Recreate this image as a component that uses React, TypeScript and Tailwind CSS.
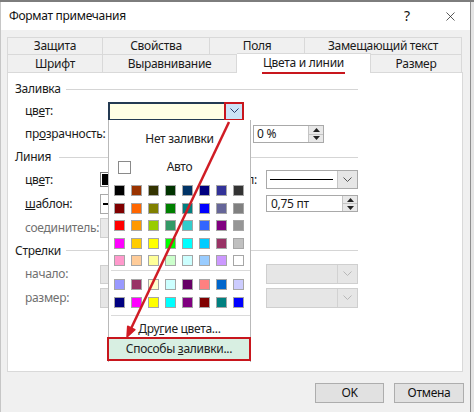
import { X } from "lucide-react";

const palette = [
  ["#000000", "#993300", "#333300", "#003300", "#003366", "#000080", "#333399", "#333333"],
  ["#800000", "#ff6600", "#808000", "#008000", "#008080", "#0000ff", "#666699", "#808080"],
  ["#ff0000", "#ff9900", "#99cc00", "#339966", "#33cccc", "#3366ff", "#800080", "#969696"],
  ["#ff00ff", "#ffcc00", "#ffff00", "#00ff00", "#00ffff", "#00ccff", "#993366", "#c0c0c0"],
  ["#ff99cc", "#ffcc99", "#ffff99", "#ccffcc", "#ccffff", "#99ccff", "#cc99ff", "#ffffff"],
];

const extra = [
  ["#9999ff", "#993366", "#ffffcc", "#ccffff", "#660066", "#ff8080", "#0066cc", "#ccccff"],
  ["#000080", "#ff00ff", "#ffff00", "#00ffff", "#800080", "#800000", "#008080", "#0000ff"],
];

function Chevron({ className = "" }: { className?: string }) {
  return (
    <svg width="9" height="6" viewBox="0 0 9 6" className={className}>
      <path d="M0.5 0.5 L4.5 4.5 L8.5 0.5" fill="none" stroke="currentColor" strokeWidth="1" />
    </svg>
  );
}

function Spinner() {
  return (
    <div className="flex flex-col w-[15px] border-l border-[#c4c4c4]">
      <div className="flex-1 flex items-center justify-center bg-[#e8e8e8] border-b border-[#c4c4c4]">
        <svg width="7" height="4" viewBox="0 0 7 4"><path d="M0 4 L3.5 0 L7 4 Z" fill="#222" /></svg>
      </div>
      <div className="flex-1 flex items-center justify-center bg-[#e8e8e8]">
        <svg width="7" height="4" viewBox="0 0 7 4"><path d="M0 0 L3.5 4 L7 0 Z" fill="#222" /></svg>
      </div>
    </div>
  );
}

function Section({ title, lineStart }: { title: string; lineStart: number }) {
  return (
    <div className="flex items-center w-[343px]">
      <span className="text-[#1a1a1a]">{title}</span>
      <div className="flex-1 h-px bg-[#d5d5d5]" style={{ marginLeft: lineStart }} />
    </div>
  );
}

function Swatches({ rows, gap }: { rows: string[][]; gap: string }) {
  return (
    <div className={`grid grid-cols-[repeat(8,11px)] gap-x-[6px] ${gap} pl-[5px]`}>
      {rows.flat().map((c, i) => (
        <div key={i} className="w-[11px] h-[11px] border border-[#a6a6a6]" style={{ backgroundColor: c }} />
      ))}
    </div>
  );
}

function ColorPopup() {
  return (
    <div className="absolute left-[100px] top-[47px] w-[143px] h-[242px] bg-white border-x border-[#b9b9b9] flex flex-col">
      <div className="h-[26px] mt-[6px] flex items-center justify-center text-[#222]">Нет заливки</div>
      <div className="h-[24px] mt-[3px] grid grid-cols-[22px_1fr_22px] items-center">
        <div className="justify-self-end w-[13px] h-[13px] border border-[#8a8a8a] bg-white" />
        <div className="text-center text-[#222]">Авто</div>
      </div>
      <div className="mt-[6px]">
        <Swatches rows={palette} gap="gap-y-[6.5px]" />
      </div>
      <div className="mt-[4px] ml-[2px] h-px bg-[#dadada]" />
      <div className="mt-[8px]">
        <Swatches rows={extra} gap="gap-y-[7px]" />
      </div>
      <div className="mt-[7px] ml-[2px] h-px bg-[#dadada]" />
      <div className="h-[21px] pt-[4px] flex items-center justify-center text-[#222]">
        <span>Дру<span className="underline">г</span>ие цвета...</span>
      </div>
      <div className="h-[24px] -ml-[2px] -mr-[1px] border-2 border-[#c8161d] bg-[#d8efe2] flex items-center justify-center text-[#222]">
        <span>Способы <span className="underline">з</span>аливки...</span>
      </div>
    </div>
  );
}

function DisabledCombo({ w, h }: { w: string; h: string }) {
  return (
    <div className={`${w} ${h} flex border border-[#cfcfcf] bg-[#e6e6e6]`}>
      <div className="flex-1" />
      <div className="w-[20px] flex items-center justify-center border-l border-[#d2d2d2] text-[#b8b8b8]">
        <Chevron />
      </div>
    </div>
  );
}

export default function App() {
  return (
    <div className="w-[474px] h-[412px] overflow-hidden bg-[#dedede] relative font-['Noto_Sans','Liberation_Sans',sans-serif] text-[12px] tracking-[-0.3px] leading-none flex flex-col">
      <div className="h-[2px] bg-[#7d7d7d]" />
      <div className="flex flex-1">
        <div className="w-[471px] flex flex-col bg-[#f0f0f0] border-l border-[#c6c6c6] border-r border-r-[#8e8e8e]">
          {/* Title bar */}
          <div className="h-[28px] bg-white flex items-center pl-[8px] text-[#111]">
            <span className="flex-1">Формат примечания</span>
            <span className="w-[10px] text-[14px] mr-[29px]">?</span>
            <X size={15} strokeWidth={1.2} className="mr-[12px] text-[#222]" />
          </div>

          {/* Tabs */}
          <div className="pt-[7px] pl-[6px] text-[#1a1a1a]">
            <div className="flex h-[17px]">
              {[
                ["Защита", "w-[96px]"],
                ["Свойства", "w-[107px]"],
                ["Поля", "w-[95px]"],
                ["Замещающий текст", "w-[157px]"],
              ].map(([t, w], i) => (
                <div key={t} className={`${w} flex items-center justify-center border-t border-r border-[#d9d9d9] ${i === 0 ? "border-l" : ""}`}>
                  {t}
                </div>
              ))}
            </div>
            <div className="flex h-[18px] items-end">
              <div className="w-[96px] h-[18px] flex items-center justify-center border-t border-l border-r border-[#d9d9d9]">Шрифт</div>
              <div className="w-[134px] h-[18px] flex items-center justify-center border-t border-r border-[#d9d9d9]">Выравнивание</div>
              <div className="w-[134px] h-[20px] -mb-px relative z-10 bg-white flex flex-col items-center justify-center border-t border-r border-[#d9d9d9]">
                <span className="pt-[3px] pb-[3px] border-b-2 border-[#c8161d] px-[1px]">Цвета и линии</span>
              </div>
              <div className="w-[91px] h-[18px] flex items-center justify-center border-t border-r border-[#d9d9d9]">Размер</div>
            </div>
          </div>

          {/* Panel */}
          <div className="ml-[6px] w-[456px] h-[300px] bg-white border border-[#d9d9d9] relative pl-[7px] pt-[8px] text-[#1a1a1a]">
            <div className="h-[16px] flex items-center">
              <Section title="Заливка" lineStart={5} />
            </div>

            {/* fill colour */}
            <div className="h-[22px] mt-[3px] flex items-center pl-[10px]">
              <span className="w-[83px]">цв<span className="underline">е</span>т:</span>
              <div className="w-[136px] h-[19px] flex border-2 border-[#243a52] bg-[#fffee4]">
                <div className="flex-1" />
                <div className="w-[16px] bg-[#cce4f7] flex items-center justify-center text-[#2b3d6b] outline-2 outline-[#c8161d]">
                  <Chevron />
                </div>
              </div>
            </div>

            {/* transparency */}
            <div className="h-[24px] flex items-center pl-[10px]">
              <span className="w-[228px]">пр<span className="underline">о</span>зрачность:</span>
              <div className="w-[71px] h-[18px] flex border border-[#a9a9a9] bg-white">
                <span className="flex-1 pl-[3px] flex items-center">0 %</span>
                <Spinner />
              </div>
            </div>

            <div className="h-[22px] flex items-center">
              <Section title="Линия" lineStart={8} />
            </div>

            {/* line colour / type */}
            <div className="h-[23px] flex items-center pl-[10px]">
              <span className="w-[75px]">цв<span className="underline">е</span>т:</span>
              <div className="w-[130px] h-[15px] border border-[#7a7a7a] bg-white p-[1px]">
                <div className="w-full h-full bg-black" />
              </div>
              <span className="w-[27px] text-right">тип:</span>
              <div className="ml-[9px] w-[92px] h-[19px] flex border border-[#a9a9a9] bg-white">
                <div className="flex-1 flex items-center pl-[3px] pr-[4px]">
                  <div className="w-full h-px bg-black" />
                </div>
                <div className="w-[20px] flex items-center justify-center border-l border-[#c6c6c6] bg-[#e6e6e6] text-[#555]">
                  <Chevron />
                </div>
              </div>
            </div>

            {/* pattern / weight */}
            <div className="h-[25px] flex items-center pl-[10px]">
              <span className="w-[75px]"><span className="underline">ш</span>аблон:</span>
              <div className="w-[130px] h-[20px] border border-[#a9a9a9] bg-white flex items-center pl-[2px]">
                <div className="w-[6px] h-[2px] bg-black" />
              </div>
              <div className="ml-[36px] w-[92px] h-[17px] flex border border-[#a9a9a9] bg-white">
                <span className="flex-1 pl-[4px] flex items-center">0,75 пт</span>
                <Spinner />
              </div>
            </div>

            {/* connector */}
            <div className="h-[23px] flex items-center pl-[10px]">
              <span className="w-[75px] text-[#707070]">соединитель:</span>
              <div className="w-[130px] h-[20px] border border-[#cfcfcf] bg-[#e9e9e9]" />
            </div>

            <div className="h-[23px] flex items-center">
              <Section title="Стрелки" lineStart={5} />
            </div>

            {/* begin */}
            <div className="h-[24px] flex items-center pl-[10px]">
              <span className="w-[75px] text-[#707070]">начало:</span>
              <div className="w-[130px] h-[19px] border border-[#cfcfcf] bg-[#e6e6e6]" />
              <div className="ml-[36px]"><DisabledCombo w="w-[92px]" h="h-[20px]" /></div>
            </div>

            {/* size */}
            <div className="h-[24px] flex items-center pl-[10px]">
              <span className="w-[75px] text-[#707070]">размер:</span>
              <div className="w-[130px] h-[20px] border border-[#cfcfcf] bg-[#e6e6e6]" />
              <div className="ml-[36px]"><DisabledCombo w="w-[92px]" h="h-[20px]" /></div>
            </div>

            <ColorPopup />
          </div>

          {/* Buttons */}
          <div className="mt-[11px] flex justify-end gap-[10px] pr-[6px]">
            <button className="w-[69px] h-[20px] bg-[#e1e1e1] border border-[#adadad] text-[#111]">OK</button>
            <button className="w-[70px] h-[20px] bg-[#e1e1e1] border border-[#adadad] text-[#111]">Отмена</button>
          </div>
        </div>
        <div className="flex-1 bg-[#e4e4e4]" />
      </div>

      {/* red annotation arrow */}
      <svg className="absolute inset-0 pointer-events-none" width="474" height="412" viewBox="0 0 474 412">
        <line x1="229" y1="122" x2="131.3" y2="328" stroke="#d01c24" strokeWidth="2.5" />
        <path d="M127 337 L134.9 329.7 L127.7 326.3 Z" fill="#d01c24" stroke="#d01c24" strokeWidth="1.5" strokeLinejoin="round" />
      </svg>
    </div>
  );
}
